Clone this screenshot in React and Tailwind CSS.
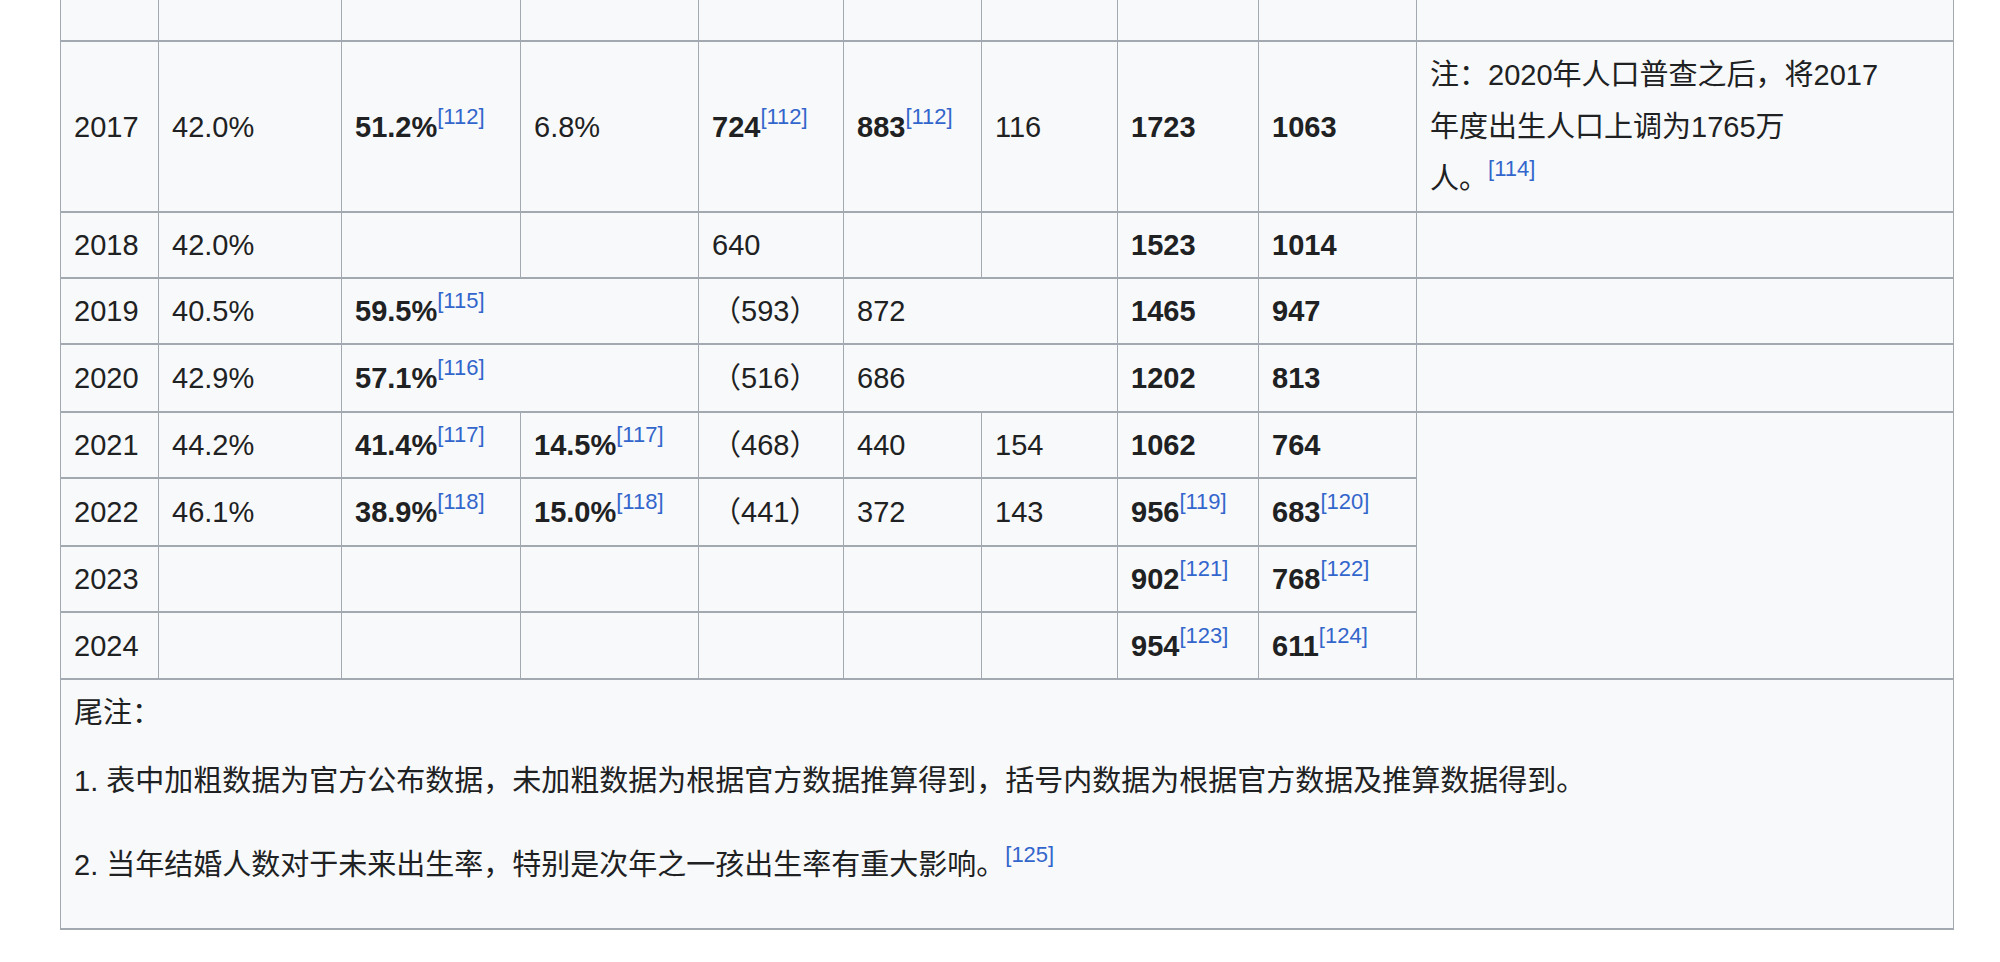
import React from 'react';

const Ref = ({ n }) => (
  <sup className="text-[#3366cc] text-[22px] leading-none relative -top-[2px] align-super">[{n}]</sup>
);

const td = 'border-x border-y-2 border-[#a2a9b1] px-[13px] align-middle';

const rows = [
  ['2018', '42.0%', '', '', '640', '', '', <b>1523</b>, <b>1014</b>],
  ['2021', '44.2%', <><b>41.4%</b><Ref n="117" /></>, <><b>14.5%</b><Ref n="117" /></>, '（468）', '440', '154', <b>1062</b>, <b>764</b>],
  ['2022', '46.1%', <><b>38.9%</b><Ref n="118" /></>, <><b>15.0%</b><Ref n="118" /></>, '（441）', '372', '143', <><b>956</b><Ref n="119" /></>, <><b>683</b><Ref n="120" /></>],
  ['2023', '', '', '', '', '', '', <><b>902</b><Ref n="121" /></>, <><b>768</b><Ref n="122" /></>],
  ['2024', '', '', '', '', '', '', <><b>954</b><Ref n="123" /></>, <><b>611</b><Ref n="124" /></>],
];

const Cells = ({ r }) => r.map((c, i) => <td key={i} className={td}>{c}</td>);

export default function App() {
  return (
    <div className="w-[2000px] h-[962px] bg-white overflow-hidden pl-[60px] -mt-[1px]" style={{ fontFamily: '"Liberation Sans", "Noto Sans CJK SC", sans-serif' }}>
      <table className="table-fixed border-collapse bg-[#f8f9fa] text-[#202122] text-[29px] leading-[46px] w-[1893px]">
        <colgroup>
          {[98, 183, 179, 178, 145, 138, 136, 141, 158, 537].map((w, i) => <col key={i} style={{ width: w }} />)}
        </colgroup>
        <tbody>
          <tr className="h-[42px]">
            {Array.from({ length: 10 }).map((_, i) => <td key={i} className="border-x border-b-2 border-[#a2a9b1]" />)}
          </tr>
          <tr className="h-[171px]">
            <Cells r={['2017', '42.0%', <><b>51.2%</b><Ref n="112" /></>, '6.8%', <><b>724</b><Ref n="112" /></>, <><b>883</b><Ref n="112" /></>, '116', <b>1723</b>, <b>1063</b>]} />
            <td className={td + ' leading-[52px] py-[6px]'}>
              注：2020年人口普查之后，将2017<br />年度出生人口上调为1765万<br />人。<Ref n="114" />
            </td>
          </tr>
          <tr className="h-[66px]"><Cells r={rows[0]} /><td className={td} /></tr>
          <tr className="h-[66px]">
            <td className={td}>2019</td><td className={td}>40.5%</td>
            <td className={td} colSpan={2}><b>59.5%</b><Ref n="115" /></td>
            <td className={td}>（593）</td>
            <td className={td} colSpan={2}>872</td>
            <td className={td}><b>1465</b></td><td className={td}><b>947</b></td><td className={td} />
          </tr>
          <tr className="h-[68px]">
            <td className={td}>2020</td><td className={td}>42.9%</td>
            <td className={td} colSpan={2}><b>57.1%</b><Ref n="116" /></td>
            <td className={td}>（516）</td>
            <td className={td} colSpan={2}>686</td>
            <td className={td}><b>1202</b></td><td className={td}><b>813</b></td><td className={td} />
          </tr>
          <tr className="h-[66px]"><Cells r={rows[1]} /><td className={td} rowSpan={4} /></tr>
          <tr className="h-[68px]"><Cells r={rows[2]} /></tr>
          <tr className="h-[66px]"><Cells r={rows[3]} /></tr>
          <tr className="h-[67px]"><Cells r={rows[4]} /></tr>
          <tr>
            <td colSpan={10} className="border-x border-y-2 border-[#a2a9b1] px-[13px] pt-[10px] h-[250px] align-top">
              <p>尾注：</p>
              <p className="mt-[22px]">1. 表中加粗数据为官方公布数据，未加粗数据为根据官方数据推算得到，括号内数据为根据官方数据及推算数据得到。</p>
              <p className="mt-[38px]">2. 当年结婚人数对于未来出生率，特别是次年之一孩出生率有重大影响。<Ref n="125" /></p>
            </td>
          </tr>
        </tbody>
      </table>
    </div>
  );
}
